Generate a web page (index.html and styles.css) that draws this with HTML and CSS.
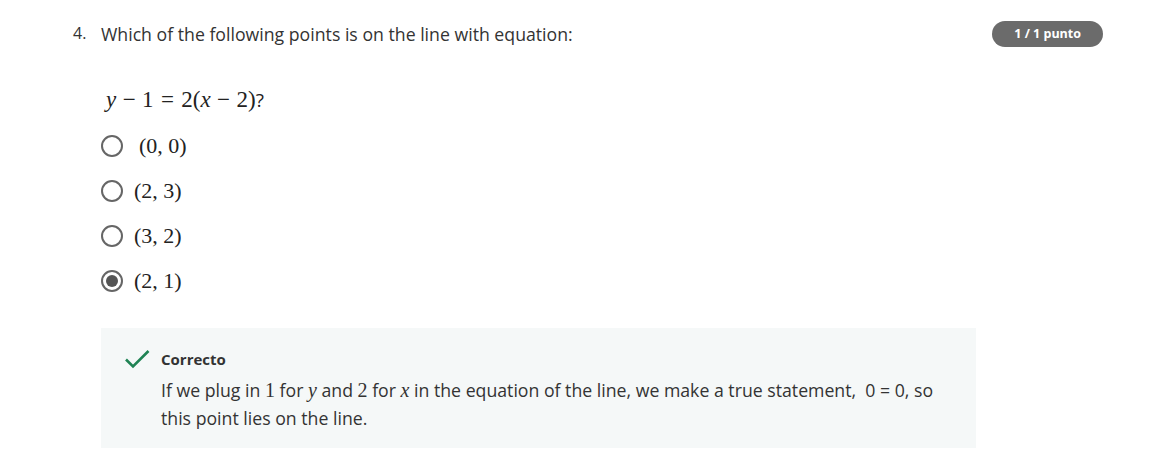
FILE: index.html
```html
<!DOCTYPE html>
<html>
<head>
<meta charset="utf-8">
<link rel="stylesheet" href="styles.css">
</head>
<body>
<div class="question">
  <div class="head">
    <span class="num">4.</span>
    <div class="prompt">Which of the following points is on the line with equation:</div>
    <span class="badge">1 / 1 punto</span>
  </div>
  <div class="body">
    <div class="equation"><span class="tex"><i>y</i><span class="bin">−</span>1<span class="rel">=</span>2(<i>x</i><span class="bin">−</span>2)</span>?</div>
    <ul class="options">
      <li class="option"><span class="radio"></span><span class="math first">(0, 0)</span></li>
      <li class="option"><span class="radio"></span><span class="math">(2, 3)</span></li>
      <li class="option"><span class="radio"></span><span class="math">(3, 2)</span></li>
      <li class="option"><span class="radio checked"></span><span class="math">(2, 1)</span></li>
    </ul>
    <div class="feedback">
      <svg class="check" width="26" height="20" viewBox="0 0 26 20"><path d="M2 10.5 L9 17.5 L24.5 2" fill="none" stroke="#1f8354" stroke-width="2.6"/></svg>
      <div class="fb-text">
        <div class="fb-title">Correcto</div>
        <p class="fb-body">If we plug in <span class="m">1</span> for <i class="m">y</i> and <span class="m">2</span> for <i class="m">x</i> in the equation of the line, we make a true statement,&nbsp; 0 = 0, so this point lies on the line.</p>
      </div>
    </div>
  </div>
</div>
</body>
</html>
```
FILE: styles.css
```css
body {
  margin: 0;
  background: #fff;
  font-family: "Open Sans", sans-serif;
  color: #333;
}
.question {
  padding: 22px 71px 0 73px;
}
.head {
  display: flex;
  align-items: flex-start;
}
.num {
  font-size: 16px;
  width: 28px;
  line-height: 22px;
}
.prompt {
  flex: 1;
  font-size: 17.7px;
  line-height: 24px;
}
.badge {
  margin-top: -1px;
  background: #6b6b6b;
  color: #fff;
  font-weight: 700;
  font-size: 12.5px;
  border-radius: 13px;
  height: 26px;
  line-height: 26px;
  padding: 0 22px;
}
.body {
  padding-left: 28px;
}
.equation {
  font-size: 19px;
  margin: 38px 0 0 5px;
  line-height: 30px;
  color: #222;
}
.tex {
  font-family: "Liberation Serif", serif;
  font-size: 23px;
}
.bin {
  margin: 0 0.28em;
}
.rel {
  margin: 0 0.32em;
}
.options {
  list-style: none;
  margin: 8px 0 0;
  padding: 0;
}
.option {
  display: flex;
  align-items: center;
  height: 45px;
}
.radio {
  width: 18px;
  height: 18px;
  border: 2px solid #666;
  border-radius: 50%;
  box-sizing: content-box;
  margin-right: 11px;
  display: flex;
  align-items: center;
  justify-content: center;
}
.radio.checked::after {
  content: "";
  width: 12px;
  height: 12px;
  border-radius: 50%;
  background: #555;
}
.math {
  font-family: "Liberation Serif", serif;
  font-size: 22px;
  color: #222;
}
.math.first {
  margin-left: 5px;
}
.feedback {
  margin-top: 25px;
  width: 875px;
  background: #f5f8f8;
  display: flex;
  padding: 20px 0 16px 23px;
  box-sizing: border-box;
}
.check {
  margin-top: 1px;
  margin-right: 11px;
}
.fb-title {
  font-weight: 700;
  font-size: 15px;
  line-height: 22px;
}
.fb-body {
  margin: 6px 0 0;
  font-size: 17.7px;
  line-height: 28px;
  max-width: 790px;
}
.m {
  font-family: "Liberation Serif", serif;
  font-size: 20px;
  line-height: 1;
}
```
